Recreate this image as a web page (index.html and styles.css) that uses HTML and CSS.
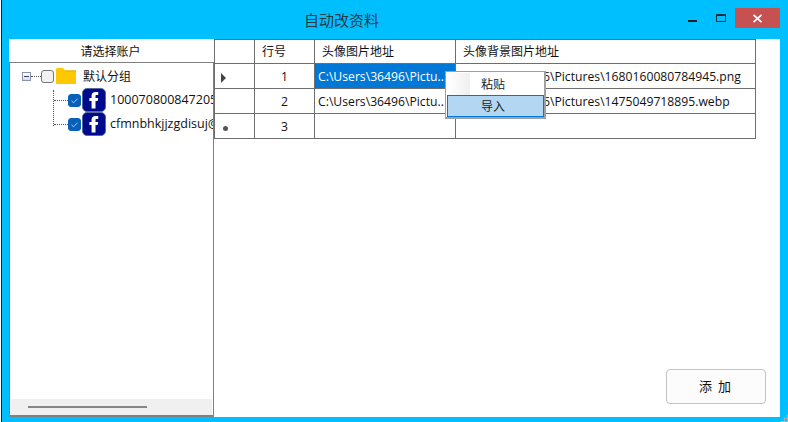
FILE: index.html
```html
<!DOCTYPE html>
<html lang="zh-CN">
<head>
<meta charset="utf-8">
<title>自动改资料</title>
<link rel="stylesheet" href="styles.css">
</head>
<body>
<div class="window">
  <header class="titlebar">
    <div class="title">自动改资料</div>
    <div class="controls">
      <span class="ctl-min"></span>
      <span class="ctl-max"></span>
      <span class="ctl-close">
        <svg width="11" height="9" viewBox="0 0 11 9"><path d="M1.5 .8L9.5 8.2M9.5 .8L1.5 8.2" stroke="#fff" stroke-width="1.8" fill="none"/></svg>
      </span>
    </div>
  </header>
  <div class="content">
    <aside class="side">
      <div class="side-head">请选择账户</div>
      <div class="tree">
        <div class="tree-body">
          <div class="node root">
            <span class="expander"></span>
            <span class="dots-h root-dots"></span>
            <span class="cb"></span>
            <svg class="folder" width="20" height="16" viewBox="0 0 20 16"><path d="M0 1.5Q0 0 1.5 0H7L9 2.5H20V16H0Z" fill="#ffc800"/><path d="M9 2.5H20V3.5H8.5Z" fill="#e8b000"/></svg>
            <span class="label root-label">默认分组</span>
          </div>
          <div class="children">
            <div class="node child">
              <span class="dots-h"></span>
              <span class="cb on"><svg width="13" height="13" viewBox="0 0 13 13"><path d="M3.5 6.8L5.6 8.8L9.6 4.6" stroke="#a9cdf0" stroke-width="1" fill="none"/></svg></span>
              <svg class="fb" width="24" height="24" viewBox="0 0 24 24"><rect x=".5" y=".5" width="23" height="23" rx="4.5" fill="#000a8c" stroke="#5a6a9c"/><path d="M9.6 20.5V13H7.4V10H9.6V7.8C9.6 5.2 11.2 4 13.4 4H16.2V7H14.7C13.7 7 13.5 7.5 13.5 8.2V10H16.2L15.7 13H13.5V20.5Z" fill="#fff"/></svg>
              <span class="label">100070800847205</span>
            </div>
            <div class="node child">
              <span class="dots-h"></span>
              <span class="cb on"><svg width="13" height="13" viewBox="0 0 13 13"><path d="M3.5 6.8L5.6 8.8L9.6 4.6" stroke="#a9cdf0" stroke-width="1" fill="none"/></svg></span>
              <svg class="fb" width="24" height="24" viewBox="0 0 24 24"><rect x=".5" y=".5" width="23" height="23" rx="4.5" fill="#000a8c" stroke="#5a6a9c"/><path d="M9.6 20.5V13H7.4V10H9.6V7.8C9.6 5.2 11.2 4 13.4 4H16.2V7H14.7C13.7 7 13.5 7.5 13.5 8.2V10H16.2L15.7 13H13.5V20.5Z" fill="#fff"/></svg>
              <span class="label">cfmnbhkjjzgdisuj@</span>
            </div>
          </div>
        </div>
        <div class="hscroll"><span class="thumb"></span></div>
      </div>
    </aside>
    <main class="main">
      <table class="grid">
        <colgroup><col class="c0"><col class="c1"><col class="c2"><col class="c3"></colgroup>
        <thead>
          <tr><th></th><th>行号</th><th>头像图片地址</th><th>头像背景图片地址</th></tr>
        </thead>
        <tbody>
          <tr><td class="mark"><span class="arrow"></span></td><td class="center">1</td><td class="sel">C:\Users\36496\Pictu..</td><td>C:\Users\36496\Pictures\1680160080784945.png</td></tr>
          <tr><td></td><td class="center">2</td><td>C:\Users\36496\Pictu..</td><td>C:\Users\36496\Pictures\1475049718895.webp</td></tr>
          <tr><td class="mark"><span class="star"></span></td><td class="center">3</td><td></td><td></td></tr>
        </tbody>
      </table>
      <button class="add">添&nbsp;&nbsp;加</button>
    </main>
    <div class="menu">
      <div class="menu-item"><span class="gutter"></span><span class="menu-text">粘贴</span></div>
      <div class="menu-item active"><span class="gutter"></span><span class="menu-text">导入</span></div>
    </div>
  </div>
  <span class="grip"></span>
</div>
</body>
</html>
```
FILE: styles.css
```css
* { box-sizing: border-box; }
html, body { margin: 0; padding: 0; }
body {
  width: 788px;
  height: 422px;
  overflow: hidden;
  background: #fff;
  font-family: "Open Sans", "Noto Sans CJK SC", sans-serif;
  font-size: 12.2px;
  color: #111;
}
.window {
  position: relative;
  width: 787px;
  height: 422px;
  margin-left: 1px;
  border-left: 1px solid #222;
  background: #00bfff;
  display: flex;
  flex-direction: column;
}
.titlebar {
  height: 38px;
  margin-top: 1px;
  display: flex;
  align-items: flex-start;
}
.title {
  margin: 9px 0 0 302px;
  font-family: "Noto Sans CJK SC", sans-serif;
  font-size: 15px;
  line-height: 19px;
  color: #2b3a44;
}
.controls {
  margin-left: auto;
  margin-right: 8px;
  display: flex;
  align-items: flex-start;
}
.ctl-min { width: 9px; height: 2px; margin-top: 19px; background: #222; }
.ctl-max { width: 10px; height: 8px; margin: 13px 0 0 19px; border: 1px solid #12303f; border-top-width: 2px; }
.ctl-close {
  width: 45px;
  height: 20px;
  margin: 7px 0 0 9px;
  background: #c75050;
  display: flex;
  align-items: center;
  justify-content: center;
}
.content {
  position: relative;
  height: 378px;
  margin: 0 8px 0 7px;
  background: #fff;
  display: flex;
}
.side {
  width: 205px;
  flex: none;
  display: flex;
  flex-direction: column;
}
.side-head {
  height: 23px;
  line-height: 23px;
  padding-right: 2px;
  text-align: center;
  font-family: "Noto Sans CJK SC", sans-serif;
  font-size: 12px;
}
.tree {
  flex: 1;
  border: 1px solid #808080;
  border-width: 1px 1px 2px 1px;
  display: flex;
  flex-direction: column;
  overflow: hidden;
  width: 205px;
}
.tree-body {
  flex: 1;
  padding-top: 1px;
  overflow: hidden;
  white-space: nowrap;
}
.node { display: flex; align-items: center; position: relative; }
.root { height: 24px; padding-left: 12px; }
.expander {
  width: 9px;
  height: 9px;
  flex: none;
  margin-top: 1px;
  border: 1px solid #8a94b0;
  background: linear-gradient(#fff, #d8dce8);
  position: relative;
}
.expander::after {
  content: "";
  position: absolute;
  left: 1px;
  top: 3px;
  width: 5px;
  height: 1px;
  background: #445;
}
.dots-h {
  width: 10px;
  height: 0;
  flex: none;
  border-top: 1px dotted #555;
}
.cb {
  width: 13px;
  height: 13px;
  flex: none;
  border: 1px solid #777;
  border-radius: 3px;
  background: #f2f2f2;
}
.cb.on { background: #0a60b8; border-color: #0a60b8; display: flex; align-items: center; justify-content: center; }
.cb svg { flex: none; }
.folder { margin-left: 2px; flex: none; }
.label { font-size: 12.5px; margin-left: 7px; line-height: 24px; }
.root-label { font-family: "Noto Sans CJK SC", sans-serif; font-size: 12px; }
.fb { flex: none; margin-left: 1px; }
.children {
  margin-left: 43px;
  position: relative;
}
.children::before {
  content: "";
  position: absolute;
  left: 0;
  top: 2px;
  height: 36px;
  border-left: 1px dotted #555;
}
.child { height: 24px; padding-left: 1px; }
.child .dots-h { width: 14px; }
.child .label { margin-left: 4px; }
.hscroll {
  height: 16px;
  flex: none;
  margin: 0 1px;
  background: #f0f0f0;
  padding: 7px 0 0 17px;
}
.thumb { display: block; width: 119px; height: 2px; background: #868686; }
.main {
  flex: 1;
  display: flex;
  flex-direction: column;
  align-items: flex-start;
  padding-bottom: 13px;
}
.grid {
  border-collapse: collapse;
  table-layout: fixed;
  width: 542px;
  border: 1px solid #6e6e6e;
}
.c0 { width: 40px; }
.c1 { width: 60px; }
.c2 { width: 141px; }
.c3 { width: 300px; }
.grid th, .grid td {
  border: 1px solid #6e6e6e;
  height: 25px;
  padding: 0 0 0 3px;
  font-weight: 400;
  text-align: left;
  white-space: nowrap;
  overflow: hidden;
}
.grid thead th { height: 24px; font-family: "Noto Sans CJK SC", sans-serif; font-size: 12px; padding: 0 0 2px 7px; }
.grid .center { text-align: center; padding-left: 0; }
.grid td:last-child { padding-left: 7px; }
.grid .sel { background: #0078d7; color: #fff; }
.mark { position: relative; }
.arrow {
  display: block;
  margin: 3px 0 0 3px;
  width: 0;
  height: 0;
  border-left: 5px solid #444;
  border-top: 5px solid transparent;
  border-bottom: 5px solid transparent;
}
.star {
  display: block;
  margin: 4px 0 0 5px;
  width: 5px;
  height: 5px;
  border-radius: 50%;
  background: #555;
}
.add {
  margin-top: auto;
  margin-left: 452px;
  width: 100px;
  height: 35px;
  background: #fcfcfc;
  border: 1px solid #c4c4c4;
  border-radius: 4px;
  font-family: "Noto Sans CJK SC", sans-serif;
  font-size: 13px;
  color: #111;
  padding: 0 2px 2px 0;
}
.menu {
  position: absolute;
  left: 436px;
  top: 32px;
  width: 101px;
  height: 48px;
  background: #fff;
  border: 2px solid #a0a0a0;
  border-width: 1px 2px 2px 1px;
  padding: 1px 0 0 1px;
  display: flex;
  flex-direction: column;
  font-family: "Noto Sans CJK SC", sans-serif;
  font-size: 12px;
}
.menu-item { display: flex; align-items: center; height: 22px; color: #222; }
.menu-item:first-child { height: 23px; }
.menu-text { margin-top: -2px; }
.gutter { width: 23px; align-self: stretch; margin-right: 11px; background: linear-gradient(90deg, #fff, #efefef); }
.active { background: #b3d7f3; border: 1px solid #0078d7; }
.active .gutter { background: none; margin-right: 10px; }
.grip {
  position: absolute;
  right: 0;
  bottom: 0;
  width: 8px;
  height: 8px;
  background:
    radial-gradient(#b0b0b0 1px, transparent 1.2px) 0 0 / 3px 3px;
  clip-path: polygon(100% 0, 100% 100%, 0 100%);
}
```
